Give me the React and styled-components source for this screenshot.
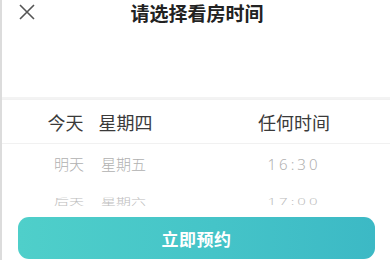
import React, { useState } from 'react'
import styled, { createGlobalStyle } from 'styled-components'

const GlobalStyle = createGlobalStyle`
  html, body {
    margin: 0;
    padding: 0;
    background: #fff;
  }
  body {
    font-family: 'Noto Sans CJK SC', 'Noto Sans', sans-serif;
  }
`

//#region styles
const Sheet = styled.div`
  width: 390px;
  height: 260px;
  box-sizing: border-box;
  border-left: 2px solid #dcdcdc;
  overflow: hidden;
  display: flex;
  flex-direction: column;
`

const Header = styled.div`
  position: relative;
  height: 24px;
  padding-top: 1px;
  display: flex;
  align-items: center;
  justify-content: center;
`

const CloseButton = styled.button`
  position: absolute;
  left: 16px;
  top: 3px;
  width: 18px;
  height: 18px;
  padding: 0;
  border: none;
  background: none;
  display: flex;
  align-items: center;
  justify-content: center;
`

const Title = styled.div`
  font-size: 19px;
  font-weight: 700;
  color: #222;
  line-height: 22px;
  margin-left: 2px;
`

const Divider = styled.div`
  margin-top: 72px;
  height: 2px;
  background: #f3f3f3;
`

const Picker = styled.div`
  display: flex;
  flex-direction: column;
  height: 118px;
`

const Row = styled.div`
  display: grid;
  grid-template-columns: 196px 1fr;
  align-items: center;
  height: ${(p) => p.$h}px;
  border-top: ${(p) => (p.$active ? '1px solid #f1f1f1' : 'none')};
  border-bottom: ${(p) => (p.$active ? '1px solid #f1f1f1' : 'none')};
  transform: scaleY(${(p) => p.$squash || 1});
`

const DayCell = styled.div`
  display: flex;
  justify-content: center;
  gap: ${(p) => p.$gap}px;
  font-size: ${(p) => p.$size}px;
  font-weight: ${(p) => p.$weight};
  color: ${(p) => p.$color};
`

const TimeCell = styled.div`
  text-align: center;
  font-size: ${(p) => p.$size}px;
  font-weight: ${(p) => p.$weight};
  color: ${(p) => p.$color};
  letter-spacing: ${(p) => p.$spacing || 0}px;
  font-family: ${(p) => (p.$digits ? "'Noto Sans', sans-serif" : 'inherit')};
`

const Footer = styled.div`
  padding: 0 15px 0 16px;
`

const BookButton = styled.button`
  width: 100%;
  height: 42px;
  border: none;
  border-radius: 11px;
  background: linear-gradient(90deg, #4fcfca 0%, #45c4c8 55%, #3cb9c5 100%);
  color: #fff;
  font-family: inherit;
  font-size: 17px;
  font-weight: 700;
  letter-spacing: 0.5px;
`
//#endregion

const rows = [
  { date: '今天', week: '星期四', time: '任何时间', size: 18, timeSize: 18, gap: 15, weight: 400, color: '#3a3a3a', h: 44, active: true },
  { date: '明天', week: '星期五', time: '16:30', size: 15, timeSize: 15, gap: 17, weight: 300, color: '#b0b0b0', h: 40, digits: true, spacing: 3 },
  { date: '后天', week: '星期六', time: '17:00', size: 15, timeSize: 15, gap: 17, weight: 300, color: '#bdbdbd', h: 34, digits: true, spacing: 3, squash: 0.62 },
]

function App() {
  const [selected] = useState(0)

  return (
    <>
      <GlobalStyle />
      <Sheet>
        <Header>
          <CloseButton aria-label="close">
            <svg width="16" height="16" viewBox="0 0 16 16">
              <path d="M1 1 L15 15 M15 1 L1 15" stroke="#555" strokeWidth="1.6" fill="none" />
            </svg>
          </CloseButton>
          <Title>请选择看房时间</Title>
        </Header>
        <Divider />
        <Picker>
          {rows.map((r, i) => (
            <Row key={r.date} $h={r.h} $active={i === selected} $squash={r.squash}>
              <DayCell $size={r.size} $gap={r.gap} $weight={r.weight} $color={r.color}>
                <span>{r.date}</span>
                <span>{r.week}</span>
              </DayCell>
              <TimeCell
                $size={r.timeSize}
                $weight={r.weight}
                $color={r.color}
                $spacing={r.spacing}
                $digits={r.digits}
              >
                {r.time}
              </TimeCell>
            </Row>
          ))}
        </Picker>
        <Footer>
          <BookButton>立即预约</BookButton>
        </Footer>
      </Sheet>
    </>
  )
}

export default App
